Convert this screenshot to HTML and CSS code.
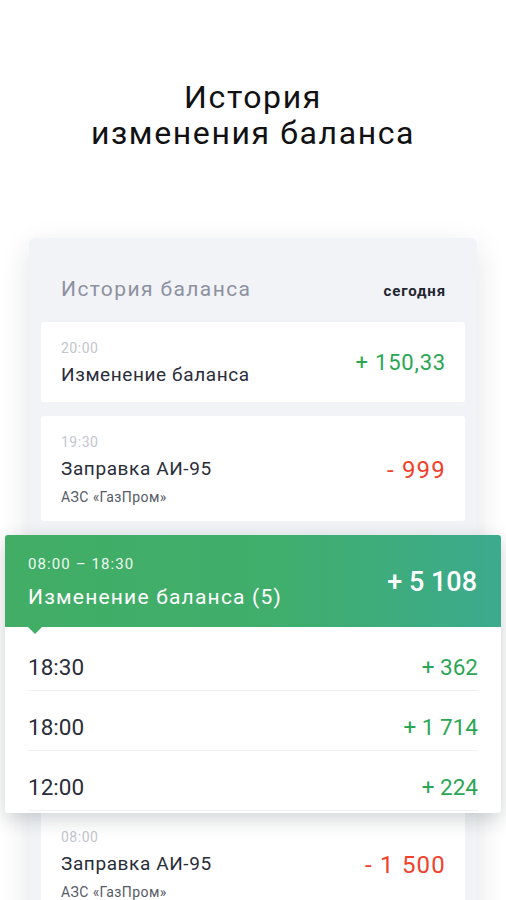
FILE: index.html
```html
<!DOCTYPE html>
<html lang="ru">
<head>
<meta charset="utf-8">
<title>История изменения баланса</title>
<link rel="stylesheet" href="styles.css">
</head>
<body>
<h1 class="heading">История<br>изменения баланса</h1>
<section class="card">
  <div class="card-head">
    <span class="card-title">История баланса</span>
    <span class="card-date">сегодня</span>
  </div>
  <div class="items">
    <div class="item">
      <div class="item-text">
        <div class="item-time">20:00</div>
        <div class="item-title">Изменение баланса</div>
      </div>
      <div class="amount plus">+ 150,33</div>
    </div>
    <div class="item">
      <div class="item-text">
        <div class="item-time">19:30</div>
        <div class="item-title">Заправка АИ-95</div>
        <div class="item-sub">АЗС «ГазПром»</div>
      </div>
      <div class="amount minus">- 999</div>
    </div>
    <div class="group">
      <div class="group-head">
        <div class="group-text">
          <div class="group-time">08:00 – 18:30</div>
          <div class="group-title">Изменение баланса (5)</div>
        </div>
        <div class="group-amount">+ 5 108</div>
        <span class="arrow"></span>
      </div>
      <div class="group-list">
        <div class="row"><span class="row-time">18:30</span><span class="row-amount">+ 362</span></div>
        <div class="row"><span class="row-time">18:00</span><span class="row-amount">+ 1 714</span></div>
        <div class="row"><span class="row-time">12:00</span><span class="row-amount">+ 224</span></div>
      </div>
    </div>
    <div class="item after-group">
      <div class="item-text">
        <div class="item-time">08:00</div>
        <div class="item-title">Заправка АИ-95</div>
        <div class="item-sub">АЗС «ГазПром»</div>
      </div>
      <div class="amount minus">- 1 500</div>
    </div>
  </div>
</section>
</body>
</html>
```
FILE: styles.css
```css
* { box-sizing: border-box; }
html, body { margin: 0; padding: 0; }
body {
  background: #ffffff;
  font-family: Roboto, "Noto Sans", "Liberation Sans", sans-serif;
  color: #2a2d3a;
  width: 506px;
  height: 900px;
  overflow: hidden;
}
.heading {
  margin: 0;
  padding-top: 79px;
  font-size: 32px;
  line-height: 36px;
  font-weight: 400;
  text-align: center;
  color: #111114;
  letter-spacing: 1.6px;
}
.card {
  margin: 87px 29px 0;
  background: #f1f3f6;
  border-radius: 6px;
  box-shadow: 0 10px 30px rgba(30, 40, 60, 0.13);
  padding: 0 12px 40px;
}
.card-head {
  display: flex;
  justify-content: space-between;
  align-items: baseline;
  padding: 38px 19px 20px 20px;
}
.card-title {
  font-size: 21px;
  line-height: 26px;
  color: #8d91a1;
  letter-spacing: 1.4px;
}
.card-date {
  font-size: 15px;
  font-weight: 700;
  color: #22252f;
  letter-spacing: 0.9px;
}
.items {
  display: flex;
  flex-direction: column;
  gap: 14px;
}
.item {
  background: #ffffff;
  border-radius: 3px;
  display: flex;
  justify-content: space-between;
  align-items: center;
  padding: 18px 19px 16px 20px;
}
.item-time {
  font-size: 14px;
  line-height: 16px;
  color: #c3c6cd;
  letter-spacing: 0.5px;
}
.item-title {
  margin-top: 8px;
  font-size: 19px;
  line-height: 22px;
  color: #2a2d3a;
  letter-spacing: 0.6px;
}
.item-sub {
  margin-top: 9px;
  font-size: 14px;
  line-height: 16px;
  color: #555a66;
  letter-spacing: 0.4px;
}
.amount {
  font-size: 22px;
  line-height: 26px;
  letter-spacing: 0.8px;
}
.amount.plus { color: #2aa654; }
.amount.minus { color: #f0412b; font-size: 24px; letter-spacing: 1.2px; }
.group {
  position: relative;
  z-index: 1;
  margin: 0 -36px;
  box-shadow: 0 6px 20px rgba(20, 30, 40, 0.2);
  border-radius: 3px;
  background: #ffffff;
}
.group-head {
  position: relative;
  display: flex;
  justify-content: space-between;
  align-items: center;
  padding: 20px 24px 17px 23px;
  background: linear-gradient(90deg, #41ad65 0%, #40ae6c 55%, #3caa8d 100%);
  border-radius: 3px 3px 0 0;
  color: #ffffff;
}
.group-time {
  font-size: 15px;
  line-height: 18px;
  color: #eef8f1;
  letter-spacing: 1.1px;
}
.group-title {
  margin-top: 11px;
  font-size: 21px;
  line-height: 26px;
  letter-spacing: 1.2px;
}
.group-amount {
  font-size: 27px;
  line-height: 30px;
  font-weight: 500;
  margin-top: -2px;
}
.arrow {
  position: absolute;
  left: 23px;
  bottom: -7px;
  width: 0;
  height: 0;
  border-left: 7px solid transparent;
  border-right: 7px solid transparent;
  border-top: 7px solid #40ad65;
}
.group-list {
  padding: 4px 23px 2px;
}
.row {
  display: flex;
  justify-content: space-between;
  padding: 24px 0 11px;
  line-height: 24px;
  font-size: 22.5px;
  border-bottom: 1px solid #eef0f3;
}
.row-time { color: #2a2d3a; }
.row-amount { color: #2aa654; }
.after-group {
  margin-top: -16px;
}
```
